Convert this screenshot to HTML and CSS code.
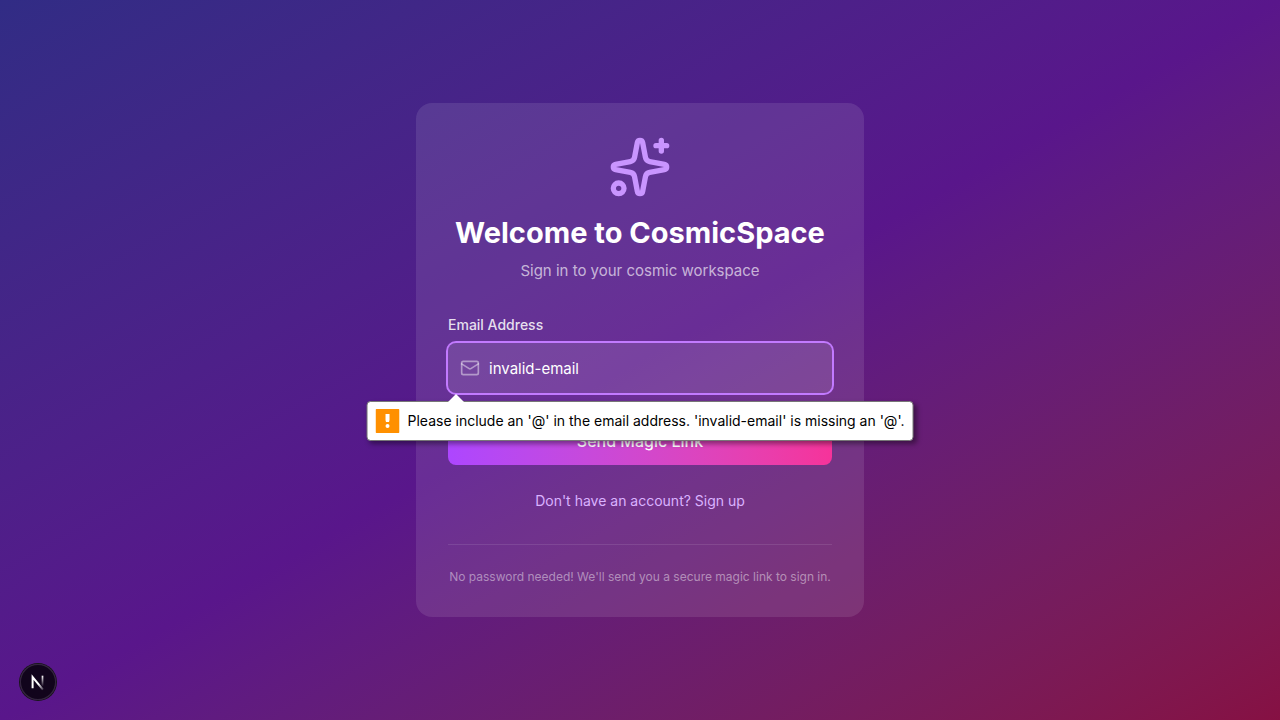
FILE: index.html
```html
<!DOCTYPE html>
<html lang="en">
<head>
<meta charset="utf-8">
<meta name="viewport" content="width=device-width, initial-scale=1">
<title>CosmicSpace</title>
<link rel="stylesheet" href="styles.css">
</head>
<body>
<main class="page">
  <section class="card">
    <header class="intro">
      <svg class="logo" viewBox="0 0 24 24" fill="none" stroke="currentColor" stroke-width="2" stroke-linecap="round" stroke-linejoin="round" aria-hidden="true">
        <path d="M11.017 2.814a1 1 0 0 1 1.966 0l1.051 5.558a2 2 0 0 0 1.594 1.594l5.558 1.051a1 1 0 0 1 0 1.966l-5.558 1.051a2 2 0 0 0-1.594 1.594l-1.051 5.558a1 1 0 0 1-1.966 0l-1.051-5.558a2 2 0 0 0-1.594-1.594l-5.558-1.051a1 1 0 0 1 0-1.966l5.558-1.051a2 2 0 0 0 1.594-1.594z"/>
        <path d="M20 2v4M22 4h-4"/>
        <circle cx="4" cy="20" r="2"/>
      </svg>
      <h1 class="title">Welcome to CosmicSpace</h1>
      <p class="subtitle">Sign in to your cosmic workspace</p>
    </header>
    <form class="form" novalidate>
      <div class="field">
        <label class="label" for="email">Email Address</label>
        <div class="control">
          <svg class="mail" viewBox="0 0 24 24" fill="none" stroke="currentColor" stroke-width="2" stroke-linecap="round" stroke-linejoin="round" aria-hidden="true">
            <path d="m22 7-8.991 5.727a2 2 0 0 1-2.009 0L2 7"/>
            <rect x="2" y="4" width="20" height="16" rx="2"/>
          </svg>
          <input class="input" id="email" type="email" value="invalid-email" autocomplete="off" aria-describedby="email-error">
          <div class="bubble" id="email-error" role="alert">
            <svg class="warning" viewBox="0 0 24 24" aria-hidden="true">
              <rect width="24" height="24" rx="1" fill="#ff9000"/>
              <path d="M10 5h4v6l-.5 2h-3l-.5-2z" fill="#fff"/>
              <circle cx="12" cy="17" r="2" fill="#fff"/>
            </svg>
            <span>Please include an '@' in the email address. 'invalid-email' is missing an '@'.</span>
          </div>
        </div>
      </div>
      <button class="submit" type="submit">Send Magic Link</button>
    </form>
    <p class="switch"><a class="link" href="#signup">Don't have an account? Sign up</a></p>
    <footer class="note">No password needed! We'll send you a secure magic link to sign in.</footer>
  </section>
</main>
<button class="devtools" type="button" aria-label="Open Next.js Dev Tools">
  <svg class="devtools-icon" viewBox="0 0 40 40" fill="none" aria-hidden="true">
    <defs>
      <linearGradient id="fade-stem" x1="0" y1="13" x2="0" y2="25" gradientUnits="userSpaceOnUse"><stop stop-color="#fff"/><stop offset="1" stop-color="#fff" stop-opacity="0"/></linearGradient>
      <linearGradient id="fade-diagonal" x1="21" y1="22" x2="27" y2="30" gradientUnits="userSpaceOnUse"><stop stop-color="#fff"/><stop offset="1" stop-color="#fff" stop-opacity="0"/></linearGradient>
    </defs>
    <path d="M14 27V14.500L25.500 28.500" stroke="url(#fade-diagonal)" stroke-width="2.200"/>
    <path d="M25 13v13" stroke="url(#fade-stem)" stroke-width="1.900"/>
  </svg>
</button>
</body>
</html>
```
FILE: styles.css
```css
*, *::before, *::after { box-sizing: border-box; }

body {
  margin: 0;
  font-family: Inter, "Liberation Sans", sans-serif;
  font-size: 15px;
  line-height: 24px;
  color: #fff;
}

h1, p { margin: 0; }

.page {
  display: flex;
  align-items: center;
  justify-content: center;
  min-height: 100vh;
  padding: 16px;
  background: linear-gradient(to bottom right in oklab, #312c85, #59168b, #861043);
}

.card {
  width: 100%;
  max-width: 448px;
  padding: 32px;
  border-radius: 16px;
  background: rgb(255 255 255 / 0.1);
}

.intro {
  display: flex;
  flex-direction: column;
  align-items: center;
  margin-bottom: 32px;
  text-align: center;
}

.logo { width: 64px; height: 64px; margin-bottom: 16px; color: #c995ff; }
.title { margin-bottom: 8px; font-size: 29px; line-height: 36px; font-weight: 700; }
.subtitle { color: rgb(255 255 255 / 0.65); }

.form { display: flex; flex-direction: column; gap: 24px; }
.label { display: block; margin-bottom: 8px; font-size: 14px; line-height: 20px; font-weight: 500; color: rgb(255 255 255 / 0.85); }
.control { position: relative; }

.mail {
  position: absolute;
  top: 15px;
  left: 12px;
  width: 20px;
  height: 20px;
  color: rgb(255 255 255 / 0.45);
}

.input {
  display: block;
  width: 100%;
  height: 50px;
  padding: 12px 16px 12px 40px;
  border: 1px solid transparent;
  border-radius: 8px;
  outline: none;
  background: rgb(255 255 255 / 0.1);
  box-shadow: 0 0 0 2px #c27aff;
  font: inherit;
  color: #fff;
}

.bubble {
  position: absolute;
  z-index: 1;
  top: 58px;
  left: 50%;
  display: flex;
  align-items: center;
  gap: 8px;
  padding: 7px 8px;
  border: 1px solid #777;
  border-radius: 4px;
  background: #fff;
  box-shadow: 3px 3px 5px rgb(0 0 0 / 0.4);
  font-size: 14px;
  color: #000;
  white-space: nowrap;
  transform: translateX(-50%);
}

/* The pointer stays at the start of the field, whatever the bubble's width. */
.control::after {
  content: "";
  position: absolute;
  z-index: 2;
  top: 51px;
  left: 0;
  width: 16px;
  height: 8px;
  background: #fff;
  clip-path: polygon(0 100%, 50% 0, 100% 100%);
}

.warning { flex: none; width: 24px; height: 24px; }

.submit {
  height: 48px;
  border: 0;
  border-radius: 8px;
  background: linear-gradient(to right in oklab, #ad46ff, #f6339a);
  font: inherit;
  font-size: 16px;
  font-weight: 500;
  color: #fff;
  cursor: pointer;
}

.switch { margin-top: 24px; text-align: center; }
.link { font-size: 14px; color: #dab2ff; text-decoration: none; }

.note {
  margin-top: 31px;
  padding-top: 24px;
  border-top: 1px solid rgb(255 255 255 / 0.1);
  font-size: 12px;
  line-height: 16px;
  text-align: center;
  color: rgb(255 255 255 / 0.45);
}

.devtools {
  position: fixed;
  bottom: 20px;
  left: 20px;
  width: 36px;
  height: 36px;
  padding: 0;
  border: 0;
  border-radius: 50%;
  background: rgb(0 0 0 / 0.8);
  box-shadow: 0 0 0 1px #171717, inset 0 0 0 1px rgb(255 255 255 / 0.14);
}

.devtools-icon { display: block; width: 36px; height: 36px; }
```
